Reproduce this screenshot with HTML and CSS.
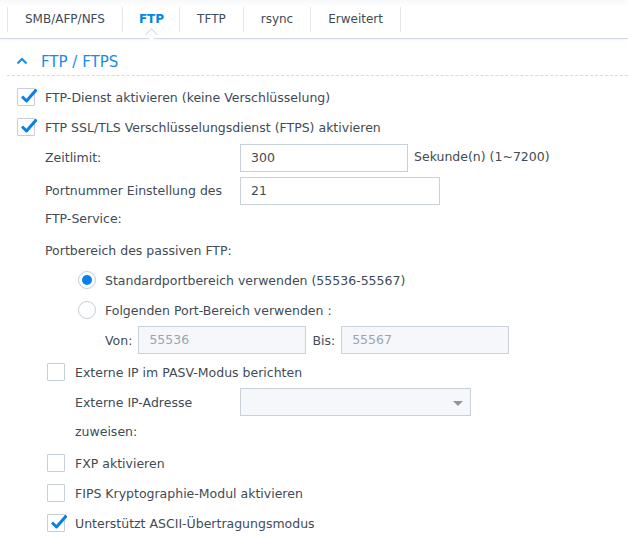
FILE: index.html
```html
<!DOCTYPE html>
<html lang="de">
<head>
<meta charset="utf-8">
<link rel="stylesheet" href="styles.css">
</head>
<body>
<div class="tabbar">
  <div class="tab">SMB/AFP/NFS</div>
  <div class="tab active">FTP<span class="notch"></span></div>
  <div class="tab">TFTP</div>
  <div class="tab">rsync</div>
  <div class="tab">Erweitert</div>
</div>

<div class="section-head">
  <svg class="chev" width="12" height="8" viewBox="0 0 12 8"><path d="M1.5 6.5 L6 2 L10.5 6.5" fill="none" stroke="#1a8be6" stroke-width="2"/></svg>
  <span class="section-title">FTP / FTPS</span>
</div>

<div class="form">
  <div class="row lvl1"><span class="cb checked"></span><span>FTP-Dienst aktivieren (keine Verschlüsselung)</span></div>
  <div class="row lvl1"><span class="cb checked"></span><span>FTP SSL/TLS Verschlüsselungsdienst (FTPS) aktivieren</span></div>

  <div class="field lvl2 f-zeit">
    <div class="label">Zeitlimit:</div>
    <div class="input w168">300</div>
    <div class="suffix">Sekunde(n) (1~7200)</div>
  </div>
  <div class="field lvl2 f-port">
    <div class="label">Portnummer Einstellung des FTP-Service:</div>
    <div class="input w200">21</div>
  </div>

  <div class="row lvl2 plain">Portbereich des passiven FTP:</div>
  <div class="row lvl3"><span class="radio on"></span><span>Standardportbereich verwenden (55536-55567)</span></div>
  <div class="row lvl3"><span class="radio"></span><span>Folgenden Port-Bereich verwenden :</span></div>
  <div class="row lvl4 range">
    <span class="rlabel">Von:</span>
    <div class="input disabled w168">55536</div>
    <span class="rlabel bis">Bis:</span>
    <div class="input disabled w168">55567</div>
  </div>

  <div class="row lvl2b f-extcb"><span class="cb"></span><span>Externe IP im PASV-Modus berichten</span></div>
  <div class="field lvl5 f-ext">
    <div class="label narrow">Externe IP-Adresse zuweisen:</div>
    <div class="select"><span class="arrow"></span></div>
  </div>

  <div class="row lvl2b f-fxp"><span class="cb"></span><span>FXP aktivieren</span></div>
  <div class="row lvl2b"><span class="cb"></span><span>FIPS Kryptographie-Modul aktivieren</span></div>
  <div class="row lvl2b"><span class="cb checked"></span><span>Unterstützt ASCII-Übertragungsmodus</span></div>
</div>
</body>
</html>
```

FILE: styles.css
```css
* { box-sizing: border-box; }
html, body { margin: 0; padding: 0; background: #fff; }
body {
  font-family: "DejaVu Sans", Verdana, sans-serif;
  font-size: 12.5px;
  color: #414b55;
  width: 628px;
  height: 537px;
  overflow: hidden;
}

.tabbar {
  display: flex;
  height: 39px;
  padding: 7px 0 0 7px;
  border-bottom: 1px solid #d3d9e0;
  box-shadow: 0 1px 2px rgba(0,0,0,0.05);
  background: linear-gradient(#f7f9fb 0, #fff 7px);
}
.tab {
  position: relative;
  height: 25px;
  line-height: 25px;
  padding: 0 17px;
  border-left: 1px solid #e2e6eb;
  color: #414b55;
  font-size: 12px;
}
.tab:last-child { border-right: 1px solid #e2e6eb; }
.tab.active { color: #0086e5; font-weight: bold; padding: 0 15px 0 16px; }
.notch {
  position: absolute;
  left: 50%;
  bottom: -7px;
  width: 9px;
  height: 9px;
  margin-left: -4px;
  background: #fff;
  border-left: 1px solid #d3d9e0;
  border-top: 1px solid #d3d9e0;
  transform: rotate(45deg);
}

.section-head {
  display: flex;
  align-items: center;
  height: 37px;
  margin: 0 0 0 7px;
  padding: 9px 0 0 9px;
  border-bottom: 1px dashed #d6dbe1;
}
.chev { margin-right: 13px; margin-top: -2px; }
.section-title { color: #1a8be6; font-size: 15px; }

.form { padding-top: 6px; }
.row {
  display: flex;
  align-items: center;
  height: 30px;
}
.lvl1 { padding-left: 17px; }
.lvl2 { padding-left: 45px; }
.lvl2b { padding-left: 47px; }
.lvl3 { padding-left: 78px; }
.lvl4 { padding-left: 105px; }
.lvl5 { padding-left: 75px; }

.cb {
  position: relative;
  flex: none;
  width: 18px;
  height: 18px;
  border: 1px solid #c6ced8;
  border-radius: 1px;
  background: #fff;
  margin-right: 10px;
}
.cb.checked::after {
  content: "";
  position: absolute;
  left: 3px;
  top: -1px;
  width: 16px;
  height: 16px;
  background: no-repeat center/16px 16px url("data:image/svg+xml;utf8,<svg xmlns='http://www.w3.org/2000/svg' viewBox='0 0 16 16'><path d='M1 8.5 L5.5 13 L15.5 1.5' fill='none' stroke='%230a7fe6' stroke-width='3' stroke-linejoin='round'/></svg>");
}

.radio {
  flex: none;
  width: 18px;
  height: 18px;
  border: 1px solid #c6ced8;
  border-radius: 50%;
  margin-right: 9px;
  display: flex;
  align-items: center;
  justify-content: center;
}
.radio.on::after {
  content: "";
  width: 10px;
  height: 10px;
  border-radius: 50%;
  background: #0a80e6;
}

.field { display: flex; align-items: flex-start; }
.label { width: 195px; line-height: 28px; flex: none; }
.label.narrow { width: 165px; line-height: 29px; }
.f-zeit { margin-top: 2px; }
.f-port { margin-top: 5px; }
.plain { margin-top: 2px; }

.input {
  height: 28px;
  line-height: 26px;
  border: 1px solid #c8d0da;
  background: #fff;
  padding-left: 10px;
  color: #414b55;
}
.w168 { width: 168px; }
.w200 { width: 200px; }
.suffix { line-height: 26px; padding-left: 6px; }
.input.disabled { background: #f5f7fa; color: #9ba5b0; }

.range { height: 30px; }
.rlabel { margin-right: 6px; }
.rlabel.bis { margin-left: 6px; }

.f-extcb { margin-top: 2px; }
.f-ext { margin-top: 1px; }
.select {
  position: relative;
  width: 231px;
  height: 28px;
  border: 1px solid #c8d0da;
  background: #f5f7fa;
}
.arrow {
  position: absolute;
  right: 7px;
  top: 12px;
  width: 0;
  height: 0;
  border-left: 5px solid transparent;
  border-right: 5px solid transparent;
  border-top: 5px solid #8d97a3;
}
.f-fxp { margin-top: 2px; }
```
